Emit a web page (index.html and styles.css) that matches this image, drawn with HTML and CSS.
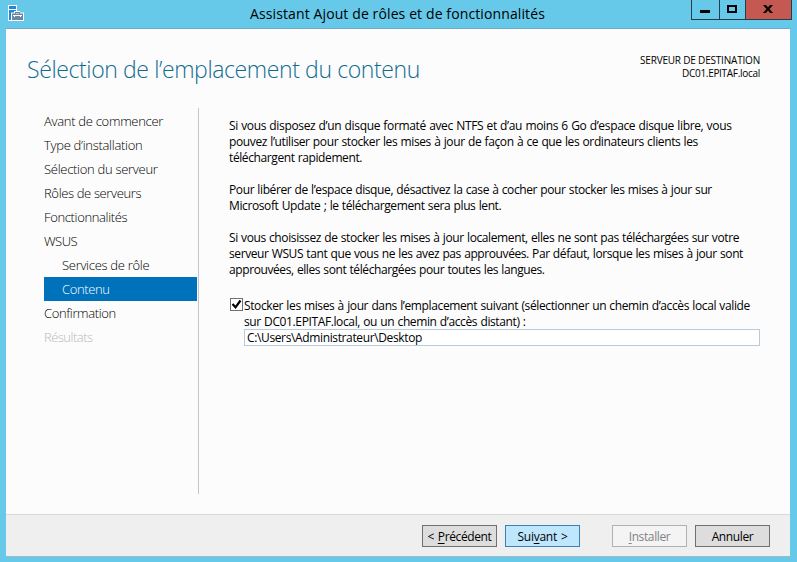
FILE: index.html
```
<!DOCTYPE html>
<html lang="fr">
<head>
<meta charset="utf-8">
<title>Assistant Ajout de rôles et de fonctionnalités</title>
<link rel="stylesheet" href="styles.css">
</head>
<body>
<div class="window">
  <header class="titlebar">
    <svg class="app-icon" width="16" height="16" viewBox="0 0 16 16">
      <path fill="#fff" d="M0 0h9v6h3v1.500h4V16H0z"/>
      <path fill="#1f8ad8" d="M1 1h7v3H1zM1 5h7v1H6v1.500H3V15H1z"/>
      <path fill="#6f87a3" d="M4 8.500h11V15H4zM7 7h5v1.500h-1V8H8v.5H7z"/>
      <path fill="#fff" d="M5 10h9v1h-1v1h-1v-1H7v1H6v-1H5z"/>
    </svg>
    <h1 class="caption">Assistant Ajout de rôles et de fonctionnalités</h1>
    <div class="controls">
      <span class="control"><svg width="10" height="10"><path d="M0 7h10v3H0z"/></svg></span>
      <span class="control"><svg width="10" height="10"><path fill="none" stroke="#000" stroke-width="2" d="M1 2h8v6H1z"/></svg></span>
      <span class="control close"><svg width="10" height="8"><path d="M0 0h3l2 2.500L7 0h3L6.500 4 10 8H7L5 5.500 3 8H0l3.500-4z"/></svg></span>
    </div>
  </header>
  <main class="client">
    <div class="heading">
      <h2 class="page-title">Sélection de l’emplacement du contenu</h2>
      <div class="destination"><div>SERVEUR DE DESTINATION</div><div class="host">DC01.EPITAF.local</div></div>
    </div>
    <div class="columns">
      <nav class="steps">
        <a class="step">Avant de commencer</a>
        <a class="step">Type d’installation</a>
        <a class="step">Sélection du serveur</a>
        <a class="step tight">Rôles de serveurs</a>
        <a class="step tight">Fonctionnalités</a>
        <a class="step tighter">WSUS</a>
        <a class="step sub">Services de rôle</a>
        <a class="step sub tight current">Contenu</a>
        <a class="step tight">Confirmation</a>
        <a class="step tighter disabled">Résultats</a>
      </nav>
      <section class="content">
        <p><span class="line wide">Si vous disposez d’un disque formaté avec NTFS et d’au moins 6 Go d’espace disque libre, vous</span>
        <span class="line even">pouvez l’utiliser pour stocker les mises à jour de façon à ce que les ordinateurs clients les</span>
        <span class="line dense">téléchargent rapidement.</span></p>
        <p><span class="line">Pour libérer de l’espace disque, désactivez la case à cocher pour stocker les mises à jour sur</span>
        <span class="line">Microsoft Update ; le téléchargement sera plus lent.</span></p>
        <p><span class="line">Si vous choisissez de stocker les mises à jour localement, elles ne sont pas téléchargées sur votre</span>
        <span class="line snug">serveur WSUS tant que vous ne les avez pas approuvées. Par défaut, lorsque les mises à jour sont</span>
        <span class="line snug">approuvées, elles sont téléchargées pour toutes les langues.</span></p>
        <div class="option">
          <span class="checkbox"><svg width="11" height="11"><path fill="none" stroke="#000" stroke-width="2.200" d="M1.500 5l3 3.300L9.500 1.500"/></svg></span>
          <div class="option-body">
            <span class="line even">Stocker les mises à jour dans l’emplacement suivant (sélectionner un chemin d’accès local valide</span>
            <span class="line even">sur DC01.EPITAF.local, ou un chemin d’accès distant) :</span>
            <div class="path">C:\Users\Administrateur\Desktop</div>
          </div>
        </div>
      </section>
    </div>
  </main>
  <footer class="footer">
    <div class="button">&lt; <u>P</u>récédent</div>
    <div class="button primary">Sui<u>v</u>ant &gt;</div>
    <div class="button inactive"><u>I</u>nstaller</div>
    <div class="button">Annuler</div>
  </footer>
</div>
</body>
</html>
```
FILE: styles.css
```
* { box-sizing: border-box; }
body { margin: 0; font: 12px/16px "Open Sans", "Noto Sans", sans-serif; color: #000; }
h1, h2, p { margin: 0; font-weight: 400; }
.window {
  width: 797px; height: 562px; padding: 0 7px 5px 6px;
  display: flex; flex-direction: column; background: #66c9ea;
}
.titlebar { position: relative; height: 29px; flex: none; border-bottom: 1px solid #71a9c9; }
.app-icon { position: absolute; left: 2px; top: 5px; }
.caption { font-size: 14px; line-height: 28px; letter-spacing: .113px; padding-left: 244px; white-space: nowrap; }
.controls {
  position: absolute; right: -2px; top: 0; display: flex;
  height: 20px; border: 1px solid #263d47; border-top: 0;
}
.control { width: 28px; display: flex; align-items: flex-start; justify-content: center; padding: 3px 1px 0 0; border-right: 1px solid #263d47; }
.control:nth-child(2) { width: 26px; padding-top: 4px; }
.control.close { width: 45px; padding-top: 5px; background: #c35950; border-right: 0; }
.client { flex: 1; background: #fcfcfc; }
.heading { height: 79px; display: flex; justify-content: space-between; padding: 23px 30px 0 21px; }
.page-title { font-size: 23px; font-weight: 300; line-height: 34px; letter-spacing: -.385px; color: #0f6c91; white-space: nowrap; }
.destination { font-size: 10px; line-height: 13px; letter-spacing: -.194px; text-align: right; padding-top: 2px; }
.host { letter-spacing: -.295px; }
.columns { display: flex; height: 386px; }
.steps { width: 193px; padding-left: 38px; padding-right: 1px; padding-top: 1px; border-right: 1px solid #c5c5c5; }
.step { display: block; height: 24px; line-height: 24px; font-size: 13px; font-weight: 300; letter-spacing: -.29px; color: #000; white-space: nowrap; }
.step.tight { letter-spacing: -.36px; }
.step.tighter { letter-spacing: -.52px; }
.step.sub { padding-left: 18px; }
.step.current { background: #0072bc; color: #fff; }
.step.disabled { color: #b9b9b9; }
.content { padding: 10px 0 0 30px; width: 561px; }
.content p { margin-bottom: 16px; }
.line { display: block; white-space: nowrap; word-spacing: .5px; letter-spacing: -.39px; }
.line.wide { letter-spacing: -.345px; }
.line.even { letter-spacing: -.378px; }
.line.snug { letter-spacing: -.405px; }
.line.dense { letter-spacing: -.4px; }
.option { display: flex; margin-top: 20px; }
.checkbox { width: 13px; height: 13px; margin: 0 1px 0 1px; border: 1px solid #707070; background: #fff; flex: none; }
.checkbox svg { display: block; }
.option-body { flex: 1; }
.path { width: 516px; height: 17px; margin-top: -1px; line-height: 15px; padding-left: 2px; border: 1px solid #b7cbdc; background: #fff; letter-spacing: -.366px; }
.footer { height: 43px; flex: none; display: flex; justify-content: flex-end; gap: 8px; padding: 10px 20px 0 0; background: #efefef; border-top: 1px solid #d9d9d9; border-bottom: 1px solid #a3b9c4; }
.button { width: 75px; height: 22px; line-height: 21px; text-align: center; letter-spacing: -.38px; word-spacing: 1px; border: 1px solid #707070; background: #ddd; white-space: nowrap; }
.button u { text-underline-offset: 2px; }
.primary { border-color: #3c7fb1; background: #bee6fd; letter-spacing: -.25px; margin-right: 24px; }
.inactive { border-color: #adb2b5; background: #f4f4f4; color: #838383; }
```
